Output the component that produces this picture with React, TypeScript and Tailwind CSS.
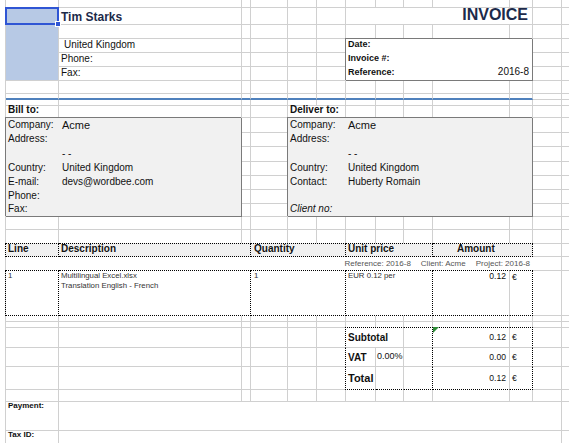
import type { ReactNode } from "react";
import { twMerge } from "tailwind-merge";

// dotted black edges used by the table header, the line item and the totals block
const dT = "-mt-px border-t [border-top-style:dotted] border-t-black";
const dB = "[border-bottom-style:dotted] border-b-black";
const dR = "[border-right-style:dotted] border-r-black";
const dL = "-ml-px border-l [border-left-style:dotted] border-l-black";

const Cell = ({ className, children }: { className?: string; children?: ReactNode }) => (
  <div
    className={twMerge(
      "flex items-end whitespace-nowrap border-r border-b border-[#d0d0d0] px-[2px] pb-px text-[10px] leading-[12px]",
      className
    )}
  >
    {children}
  </div>
);

const blanks = (n: number, className?: string) =>
  Array.from({ length: n }, (_, i) => <Cell key={i} className={className} />);

const billTo = [
  ["Company:", "Acme"],
  ["Address:", ""],
  ["", "- -"],
  ["Country:", "United Kingdom"],
  ["E-mail:", "devs@wordbee.com"],
  ["Phone:", ""],
  ["Fax:", ""],
];

const deliverTo = [
  ["Company:", "Acme"],
  ["Address:", ""],
  ["", "- -"],
  ["Country:", "United Kingdom"],
  ["Contact:", "Huberty Romain"],
  ["", ""],
  ["Client no:", ""],
];

const boxRows = [
  "h-[15px] pb-[2px]",
  "h-[14px] pb-[2px]",
  "h-[15px] pb-[2px]",
  "h-[14px] pb-[2px]",
  "h-[14px] pb-[2px]",
  "h-[14px] pb-[2px]",
  "h-[12px] pb-px",
];

const AddressBox = ({
  rows,
  className,
  labelW,
  valuePad,
}: {
  rows: string[][];
  className: string;
  labelW: string;
  valuePad: string;
}) => (
  <div
    className={twMerge(
      "flex flex-col border-r border-b border-[#7a7a7a] bg-[#f1f1f1] text-[10px] leading-[12px] shadow-[-1px_-1px_0_#7a7a7a]",
      className
    )}
  >
    {rows.map(([label, value], i) => (
      <div key={i} className={twMerge("flex items-end whitespace-nowrap", boxRows[i])}>
        <span className={twMerge("shrink-0 pl-[2px]", labelW, label === "Client no:" && "italic")}>
          {label}
        </span>
        <span className={twMerge(valuePad, value === "Acme" && "text-[11px]")}>{value}</span>
      </div>
    ))}
  </div>
);

export default function App() {
  const hd = `${dT} ${dB} ${dR} bg-[#f0f0f0] font-bold`;
  const it = `${dT} ${dB} ${dR} items-start pb-0 text-[7.8px] leading-[10px] text-[#333]`;
  const sub = "items-center pb-0";

  return (
    <div className="h-[443px] w-[569px] overflow-hidden bg-white pl-[5px] font-['Liberation_Sans',Arial,sans-serif] text-[#111]">
      <div className="grid w-max grid-cols-[53px_183px_9px_37px_29px_29px_30px_28px_29px_77px_23px_29px_20px] grid-rows-[8px_17px_14px_14px_14px_14px_13px_6px_6px_12px_15px_14px_15px_14px_14px_14px_13px_13px_14px_13px_14px_45px_6px_6px_20px_19px_23px_12px_29px_13px] border-l border-[#d0d0d0]">
        {/* r1 */}
        {blanks(13)}

        {/* r2 title */}
        <Cell className="pb-0 text-[12px] leading-[14px] font-bold text-[#1c2a4a]">Tim Starks</Cell>
        {blanks(4)}
        <Cell className="col-span-5 justify-end pr-[4px] text-[16px] leading-[16px] font-bold text-[#1c2a4a]">
          INVOICE
        </Cell>
        {blanks(2)}

        {/* r3 */}
        {blanks(12)}

        {/* r4 - r6 sender */}
        <Cell className="pl-[5px]">United Kingdom</Cell>
        {blanks(6)}
        <Cell>Phone:</Cell>
        {blanks(6)}
        <Cell>Fax:</Cell>
        {blanks(6)}

        {/* r7 - r9 */}
        {blanks(13)}
        {blanks(11, "border-b-2 border-b-[#4f81bd]")}
        {blanks(2)}
        {blanks(13)}

        {/* r10 */}
        <Cell className="font-bold">Bill to:</Cell>
        {blanks(3)}
        <Cell className="col-span-2 font-bold">Deliver to:</Cell>
        {blanks(7)}

        {/* r11 - r17 between / beside the address boxes */}
        {blanks(28)}

        {/* r18 - r19 */}
        {blanks(13)}
        {blanks(11, "border-b-transparent")}
        {blanks(2)}

        {/* r20 table header */}
        <Cell className={`${hd} ${dL}`}>Line</Cell>
        <Cell className={`${hd} col-span-2`}>Description</Cell>
        <Cell className={`${hd} col-span-3 pl-[3px]`}>Quantity</Cell>
        <Cell className={`${hd} col-span-3`}>Unit price</Cell>
        <Cell className={`${hd} col-span-2 pl-[24px]`}>Amount</Cell>
        {blanks(2)}

        {/* r21 reference line */}
        <Cell className="col-span-11 justify-end gap-[10px] border-r-transparent border-b-transparent pb-0 pr-[2px] text-[8px] text-[#555]">
          <span>Reference: 2016-8</span>
          <span>Client: Acme</span>
          <span>Project: 2016-8</span>
        </Cell>
        {blanks(2)}

        {/* r22 line item */}
        <Cell className={`${it} ${dL}`}>1</Cell>
        <Cell className={`${it} col-span-2 flex-col`}>
          <span>Multilingual Excel.xlsx</span>
          <span>Translation English - French</span>
        </Cell>
        <Cell className={`${it} col-span-3 pl-[3px]`}>1</Cell>
        <Cell className={`${it} col-span-3`}>EUR 0.12 per</Cell>
        <Cell className={`${dT} ${dB} items-start justify-end pb-0 pr-[3px] text-[8.6px] leading-[10px]`}>0.12</Cell>
        <Cell className={`${it} text-[8.6px] text-[#111]`}>€</Cell>
        {blanks(2)}

        {/* r23 - r24 */}
        {blanks(13)}
        {blanks(6)}
        {blanks(5, "border-b-transparent")}
        {blanks(2)}

        {/* r25 subtotal */}
        {blanks(5)}
        <Cell className="border-r-transparent" />
        <Cell className={`${dT} ${dL} col-span-2 ${sub} font-bold`}>Subtotal</Cell>
        <Cell className={`${dT} ${dR} ${sub}`} />
        <Cell className={`${dT} ${sub} relative justify-end pr-[3px] text-[8.6px]`}>
          <svg className="absolute -top-px left-0" width="6" height="6" viewBox="0 0 6 6">
            <polygon points="0,0 6,0 0,6" fill="#2e8b37" />
          </svg>
          0.12
        </Cell>
        <Cell className={`${dT} ${dR} ${sub} text-[8.6px]`}>€</Cell>
        {blanks(2)}

        {/* r26 vat */}
        {blanks(5)}
        <Cell className="border-r-transparent" />
        <Cell className={`${dL} ${sub} text-[10px] font-bold`}>VAT</Cell>
        <Cell className={`${sub} pl-px text-[9px]`}>0.00%</Cell>
        <Cell className={`${dR} ${sub}`} />
        <Cell className={`${sub} justify-end pr-[3px] text-[8.6px]`}>0.00</Cell>
        <Cell className={`${dR} ${sub} text-[8.6px]`}>€</Cell>
        {blanks(2)}

        {/* r27 total */}
        {blanks(5)}
        <Cell className="border-r-transparent" />
        <Cell className={`${dL} ${dB} ${sub} text-[11px] font-bold`}>Total</Cell>
        <Cell className={`${dB} ${sub}`} />
        <Cell className={`${dB} ${dR} ${sub}`} />
        <Cell className={`${dB} ${sub} justify-end pr-[3px] text-[8.6px]`}>0.12</Cell>
        <Cell className={`${dB} ${dR} ${sub} text-[8.6px]`}>€</Cell>
        {blanks(2)}

        {/* r28 */}
        {blanks(13)}

        {/* r29 - r30 footer */}
        <Cell className="items-start pb-0 text-[8px] leading-[7px] font-bold">Payment:</Cell>
        <Cell className="col-span-11" />
        <Cell />
        <Cell className="items-start pb-0 text-[8px] leading-[7px] font-bold">Tax ID:</Cell>
        <Cell className="col-span-11" />
        <Cell />

        {/* placed blocks, painted last so their edges sit over the grid lines */}
        <div className="relative col-start-1 row-span-5 row-start-2 border-r border-b border-[#d0d0d0] bg-[#b7c9e5]">
          <div className="absolute -left-px -top-px h-[18px] w-[54px] border-2 border-[#2f55d4]" />
          <div className="absolute left-[49px] top-[13px] h-[6px] w-[6px] border border-white bg-[#2f55d4]" />
        </div>

        <div className="col-span-5 col-start-7 row-span-3 row-start-4 flex flex-col border-r border-b border-[#7a7a7a] bg-white text-[9px] leading-[10px] font-bold shadow-[-1px_-1px_0_#7a7a7a]">
          <div className="h-[14px] pl-[2px]">Date:</div>
          <div className="h-[14px] pl-[2px]">Invoice #:</div>
          <div className="flex h-[13px] justify-between pl-[2px] pr-[3px]">
            <span>Reference:</span>
            <span className="text-[10px] font-normal">2016-8</span>
          </div>
        </div>

        <AddressBox
          rows={billTo}
          className="col-span-2 col-start-1 row-span-7 row-start-11"
          labelW="w-[53px]"
          valuePad="pl-[3px]"
        />
        <AddressBox
          rows={deliverTo}
          className="col-span-7 col-start-5 row-span-7 row-start-11"
          labelW="w-[58px]"
          valuePad="pl-[2px]"
        />
      </div>
    </div>
  );
}
